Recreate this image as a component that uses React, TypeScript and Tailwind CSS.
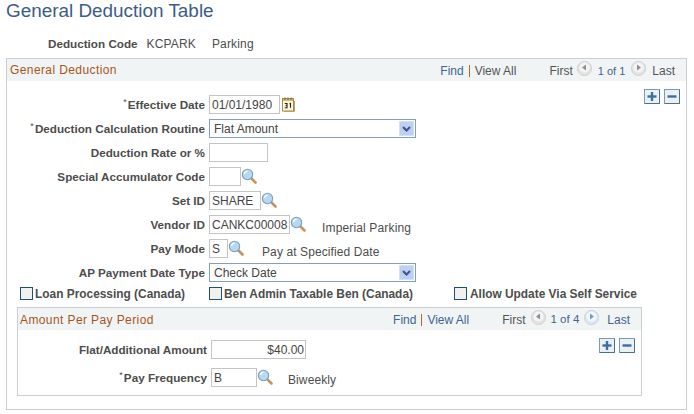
import React from 'react';

const SearchIcon = () => (
  <svg width="17" height="17" viewBox="0 0 17 17" className="shrink-0">
    <path d="M10.5 10.5 L14.5 14.5" stroke="#c8925a" strokeWidth="2.6" strokeLinecap="round" />
    <circle cx="6.5" cy="6.5" r="5.2" fill="#b5d9f5" stroke="#7d9dba" strokeWidth="1.1" />
    <path d="M3.5 6 A3.2 3.2 0 0 1 6.5 3.2" fill="none" stroke="#ffffff" strokeWidth="1.4" />
  </svg>
);

const CalendarIcon = () => (
  <svg width="13" height="15" viewBox="0 0 13 15" className="shrink-0">
    <rect x="0.5" y="1.5" width="11" height="12.5" fill="#fdf6d8" stroke="#a88a4a" />
    <rect x="1" y="2" width="10" height="2" fill="#d8b878" />
    <path d="M3 0.5V3M6 0.5V3M9 0.5V3" stroke="#7a6230" strokeWidth="1" />
    <path d="M12.5 4V14.5H2" fill="none" stroke="#b9a26c" />
    <path d="M2.8 6.5H5V8.5H3.6H5V10.8H2.8M7.5 7L8.5 6.5V10.8" fill="none" stroke="#222222" strokeWidth="1.1" />
  </svg>
);

const NavButton = ({ dir, active }: { dir: 'left' | 'right'; active?: boolean }) => (
  <svg width="15" height="16" viewBox="0 0 15 16" className="shrink-0">
    <circle cx="7.5" cy="7.5" r="7" fill={active ? '#dde8f5' : '#e4e4e4'} stroke="#cfcfcf" />
    <circle cx="7.5" cy="6.5" r="5" fill={active ? '#f2f7fc' : '#f4f4f4'} />
    <path d={dir === 'left' ? 'M9 3.5V9.5L5 6.5Z' : 'M6 3.5V9.5L10 6.5Z'} fill={active ? '#6d9bd0' : '#8e8e8e'} />
  </svg>
);

const GridButton = ({ plus }: { plus?: boolean }) => (
  <svg width="16" height="15" viewBox="0 0 16 15" className="shrink-0">
    <rect x="0.5" y="0.5" width="15" height="14" fill="#eaf1f5" stroke="#7d9cab" />
    <path d="M1 14.5H15.5V1" fill="none" stroke="#4f7080" />
    {plus && <path d="M8 3V12" stroke="#3a6ea5" strokeWidth="2.4" />}
    <path d="M3.5 7.5H12.5" stroke="#3a6ea5" strokeWidth="2.4" />
  </svg>
);

const Checkbox = () => (
  <span className="block w-[13px] h-[13px] shrink-0 border border-[#1f4e79] bg-[#f1f1ee]" />
);

const TextInput = ({ value, width, right }: { value?: string; width: string; right?: boolean }) => (
  <input
    readOnly
    value={value ?? ''}
    className={`${width} h-[19px] border border-[#c4c4c4] bg-white text-[12px] text-[#444444] outline-none ${right ? 'text-right pr-[1px]' : 'pl-[2px]'}`}
  />
);

const SelectBox = ({ value }: { value: string }) => (
  <div className="w-[207px] h-[19px] border border-[#81a0ba] bg-white flex items-center justify-between pl-[4px] pr-[1px] text-[12px] text-[#444444]">
    <span>{value}</span>
    <span className="w-[15px] h-[15px] bg-[#bccff5] border border-[#d5e0f8] flex items-center justify-center">
      <svg width="9" height="6" viewBox="0 0 9 6">
        <path d="M1 1L4.5 4.5L8 1" fill="none" stroke="#3f5480" strokeWidth="2" />
      </svg>
    </span>
  </div>
);

const Row = ({ label, req, children, labelWidth = 'w-[198px]' }: { label: string; req?: boolean; children: React.ReactNode; labelWidth?: string }) => (
  <div className="flex items-center h-[19px]">
    <label className={`${labelWidth} shrink-0 text-right font-bold text-[11.7px] text-[#4d4d4d] mr-[4px]`}>
      {req && <span className="font-normal text-[9px] align-top mr-[1px]">*</span>}
      {label}
    </label>
    {children}
  </div>
);

const PanelHeader = ({ title, count, active }: { title: string; count: string; active?: boolean }) => (
  <div className="h-[22px] bg-[#f0f4f5] flex items-center text-[12px]">
    <span className={`${active ? 'ml-[2px] mt-[2px]' : 'ml-[3px]'} tracking-[0.4px] text-[#a9541a]`}>{title}</span>
    <div className="ml-auto pt-[2px] flex items-center">
      <span className="text-[#3f6590]">Find</span>
      <span className="mx-[5px] h-[12px] w-px bg-[#b5651d]" />
      <span className={active ? 'text-[#3f6590]' : 'text-[#555555]'}>View All</span>
      <span className="ml-[33px] text-[#555555]">First</span>
      <span className={`${active ? 'ml-[5px]' : 'ml-[4px]'} -mt-[5px]`}><NavButton dir="left" /></span>
      <span className={active ? 'ml-[5px] text-[11.5px] text-[#3f6590]' : 'ml-[6px] text-[11px] text-[#3f6590]'}>{count}</span>
      <span className={`${active ? 'ml-[5px]' : 'ml-[6px]'} -mt-[5px]`}><NavButton dir="right" active={active} /></span>
      <span className={`${active ? 'ml-[8px] text-[#3f6590]' : 'ml-[6px] text-[#555555]'} mr-[11px]`}>Last</span>
    </div>
  </div>
);

export default function App() {
  return (
    <div className="w-[694px] h-[414px] bg-white overflow-hidden font-['Liberation_Sans',Arial,sans-serif]">
      <h1 className="ml-[6px] h-[22px] text-[18.9px] leading-[22px] text-[#3d5c85]">General Deduction Table</h1>

      <div className="mt-[14px] h-[16px] flex items-center text-[12px]">
        <span className="ml-[48px] font-bold text-[11.7px] text-[#4d4d4d]">Deduction Code</span>
        <span className="ml-[9px] tracking-[0.15px] text-[#4d4d4d]">KCPARK</span>
        <span className="ml-[16px] tracking-[0.15px] text-[#4d4d4d]">Parking</span>
      </div>

      <div className="mt-[6px] ml-[6px] w-[681px] h-[352px] border border-[#c9cfd4]">
        <PanelHeader title="General Deduction" count="1 of 1" />

        <div className="flex justify-end gap-[4px] pr-[6px] pt-[8px]">
          <GridButton plus />
          <GridButton />
        </div>

        <div className="flex flex-col gap-[5px] -mt-[9px]">
          <Row label="Effective Date" req>
            <TextInput value="01/01/1980" width="w-[71px]" />
            <span className="ml-[2px]"><CalendarIcon /></span>
          </Row>
          <Row label="Deduction Calculation Routine" req>
            <SelectBox value="Flat Amount" />
          </Row>
          <Row label="Deduction Rate or %">
            <TextInput width="w-[59px]" />
          </Row>
          <Row label="Special Accumulator Code">
            <TextInput width="w-[32px]" />
            <SearchIcon />
          </Row>
          <Row label="Set ID">
            <TextInput value="SHARE" width="w-[52px]" />
            <SearchIcon />
          </Row>
          <Row label="Vendor ID">
            <TextInput value="CANKC00008" width="w-[81px]" />
            <SearchIcon />
            <span className="ml-[15px] mt-[6px] text-[12px] tracking-[0.15px] text-[#4d4d4d]">Imperial Parking</span>
          </Row>
          <Row label="Pay Mode">
            <TextInput value="S" width="w-[19px]" />
            <SearchIcon />
            <span className="ml-[17px] mt-[6px] text-[12px] tracking-[0.1px] text-[#4d4d4d]">Pay at Specified Date</span>
          </Row>
          <Row label="AP Payment Date Type">
            <SelectBox value="Check Date" />
          </Row>
        </div>

        <div className="mt-[4px] h-[14px] flex items-center text-[11.9px] font-bold text-[#4d4d4d]">
          <div className="ml-[13px] w-[189px] flex items-center gap-[2px]"><Checkbox /><span className="pt-[4px]">Loan Processing (Canada)</span></div>
          <div className="w-[245px] flex items-center gap-[2px]"><Checkbox /><span className="pt-[4px]">Ben Admin Taxable Ben (Canada)</span></div>
          <div className="flex items-center gap-[3px]"><Checkbox /><span className="pt-[4px]">Allow Update Via Self Service</span></div>
        </div>

        <div className="mt-[7px] ml-[10px] w-[625px] h-[89px] border border-[#c9cfd4]">
          <PanelHeader title="Amount Per Pay Period" count="1 of 4" active />
          <div className="flex justify-end gap-[4px] pr-[6px] pt-[8px]">
            <GridButton plus />
            <GridButton />
          </div>
          <div className="flex flex-col gap-[9px] -mt-[13px]">
            <Row label="Flat/Additional Amount" labelWidth="w-[189px]">
              <TextInput value="$40.00" width="w-[95px]" right />
            </Row>
            <Row label="Pay Frequency" req labelWidth="w-[189px]">
              <TextInput value="B" width="w-[46px]" />
              <SearchIcon />
              <span className="ml-[14px] mt-[4px] text-[12px] tracking-[0.1px] text-[#4d4d4d]">Biweekly</span>
            </Row>
          </div>
        </div>
      </div>
    </div>
  );
}
